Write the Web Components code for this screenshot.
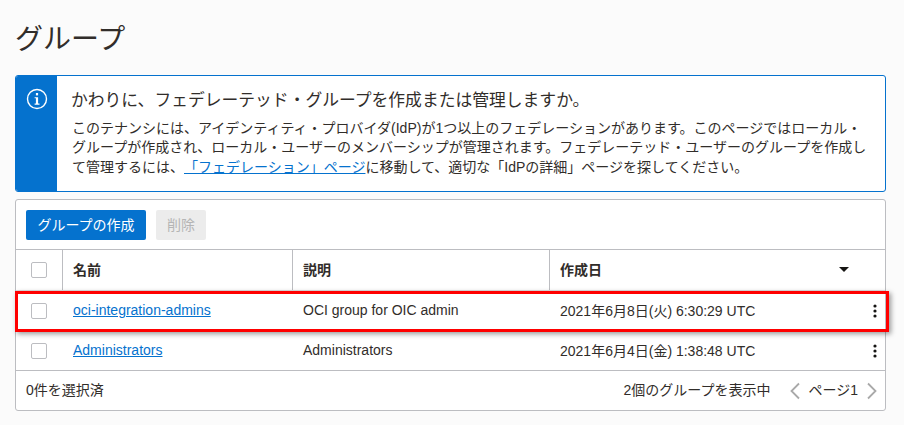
<!DOCTYPE html>
<html lang="ja">
<head>
<meta charset="utf-8">
<title>グループ</title>
<style>
  html, body { margin: 0; padding: 0; background: #fbfbfb; }
  body { font-family: "Liberation Sans", "Noto Sans CJK JP", sans-serif; color: #312d2a; width: 904px; height: 425px; overflow: hidden; text-spacing-trim: space-all; }
</style>
</head>
<body>
<groups-page>
  <info-alert>
    <span slot="title">かわりに、フェデレーテッド・グループを作成または管理しますか。</span>
    このテナンシには、アイデンティティ・プロバイダ(IdP)が1つ以上のフェデレーションがあります。このページではローカル・<br>グループが作成され、ローカル・ユーザーのメンバーシップが管理されます。フェデレーテッド・ユーザーのグループを作成し<br>て管理するには、<a href="#" style="color:#0572ce">「フェデレーション」ページ</a>に移動して、適切な「IdPの詳細」ページを探してください。
  </info-alert>
  <groups-table>
    <group-row name="oci-integration-admins" desc="OCI group for OIC admin" date="2021年6月8日(火) 6:30:29 UTC"></group-row>
    <group-row name="Administrators" desc="Administrators" date="2021年6月4日(金) 1:38:48 UTC"></group-row>
  </groups-table>
</groups-page>
<script>
const FONT = `"Liberation Sans", "Noto Sans CJK JP", sans-serif`;

class GroupsPage extends HTMLElement {
  constructor() {
    super();
    this.attachShadow({mode: 'open'}).innerHTML = `
      <style>
        :host { display: flex; flex-direction: column; padding: 0 18px 0 15px; font-family: ${FONT}; }
        h1 { margin: 0; padding-top: 20px; height: 75px; box-sizing: border-box; font-size: 28px; line-height: 40px; font-weight: 400; color: #312d2a; }
      </style>
      <h1>グループ</h1>
      <slot></slot>`;
  }
}

class InfoAlert extends HTMLElement {
  constructor() {
    super();
    this.attachShadow({mode: 'open'}).innerHTML = `
      <style>
        :host { display: flex; height: 117px; box-sizing: border-box; border: 1px solid #0572ce; border-radius: 3px; background: #fff; overflow: hidden; margin-bottom: 7px; }
        .strip { width: 41px; flex: none; background: #0572ce; display: flex; justify-content: center; padding-top: 12px; box-sizing: border-box; }
        svg { width: 22px; height: 22px; }
        .body { padding: 14px 0 0 15px; font-size: 14px; line-height: 19.3px; color: #312d2a; white-space: nowrap; }
        .title { font-size: 16.8px; line-height: 22px; margin-bottom: 7px; margin-left: -1px; }
      </style>
      <div class="strip">
        <svg viewBox="0 0 22 22" fill="none">
          <circle cx="11" cy="11" r="9.5" stroke="#fff" stroke-width="1.4"/>
          <rect x="9.9" y="5" width="2.2" height="2.4" fill="#fff"/>
          <path d="M8.6 9.2h3.5v6.4h1.4v1.1H8.6v-1.1h1.3v-5.3H8.6z" fill="#fff"/>
        </svg>
      </div>
      <div class="body">
        <div class="title"><slot name="title"></slot></div>
        <slot></slot>
      </div>`;
  }
}

class GroupsTable extends HTMLElement {
  constructor() {
    super();
    this.attachShadow({mode: 'open'}).innerHTML = `
      <style>
        :host { display: block; position: relative; height: 212px; box-sizing: border-box; border: 1px solid #bcbdc1; border-radius: 3px; background: #fff; font-size: 14px; color: #312d2a; }
        .toolbar { height: 50px; box-sizing: border-box; padding: 10px; display: flex; gap: 10px; border-bottom: 1px solid #bcbdc1; }
        button { font: inherit; font-size: 14px; border: 0; border-radius: 2px; height: 30px; padding: 0 11px 2px; width: 120px; }
        .primary { background: #0572ce; color: #fff; }
        .off { background: #ececec; color: #b5b5b5; width: 50px; padding: 0 0 2px; }
        .head { display: grid; grid-template-columns: 46px 230px 257px 1fr; height: 40px; box-sizing: border-box; font-weight: 700; font-size: 14px; }
        .head > div { display: flex; align-items: center; padding-left: 10px; padding-bottom: 2px; border-left: 1px solid #bcbdc1; box-sizing: border-box; }
        .head > div:first-child { border-left: 0; padding-left: 15px; padding-bottom: 0; }
        .head .sort { justify-content: space-between; padding-right: 36px; }
        .sort i { width: 0; height: 0; border: 5px solid transparent; border-top: 5px solid #161513; border-bottom: 0; }
        .box { width: 14px; height: 14px; border: 1px solid #bcbdc1; border-radius: 2px; background: #fff; }
        .foot { display: flex; align-items: center; justify-content: space-between; padding: 0 7px 4px 10px; border-top: 1px solid #bcbdc1; box-sizing: content-box; height: 36px; }
        .pager { display: flex; align-items: center; }
        .pager svg { width: 12px; height: 18px; margin-top: 4px; }
        .count { margin-right: 19px; }
        .page { margin: 0 8px 0 7px; }
        .mark { position: absolute; left: -1px; right: -4px; top: 91px; height: 41px; box-sizing: border-box; border: 3px solid #f00; box-shadow: 2px 2px 5px rgba(0,0,0,.4); pointer-events: none; }
      </style>
      <div class="toolbar">
        <button class="primary">グループの作成</button>
        <button class="off">削除</button>
      </div>
      <div class="head">
        <div><span class="box"></span></div>
        <div>名前</div>
        <div>説明</div>
        <div class="sort">作成日<i></i></div>
      </div>
      <slot></slot>
      <div class="foot">
        <span>0件を選択済</span>
        <span class="pager">
          <span class="count">2個のグループを表示中</span>
          <svg viewBox="0 0 12 18" fill="none" stroke="#a9a9a9" stroke-width="1.8"><path d="M10 1.5 2.5 9l7.5 7.5"/></svg>
          <span class="page">ページ1</span>
          <svg viewBox="0 0 12 18" fill="none" stroke="#a9a9a9" stroke-width="1.8"><path d="M2 1.5 9.5 9 2 16.5"/></svg>
        </span>
      </div>
      <div class="mark"></div>`;
  }
}

class GroupRow extends HTMLElement {
  constructor() {
    super();
    const name = this.getAttribute('name');
    const desc = this.getAttribute('desc');
    const date = this.getAttribute('date');
    this.attachShadow({mode: 'open'}).innerHTML = `
      <style>
        :host { display: grid; grid-template-columns: 46px 230px 257px 1fr 26px; height: 40px; box-sizing: border-box; border-top: 1px solid #dfdfdf; align-items: center; font-size: 14px; }
        .cell { padding-left: 11px; padding-bottom: 2px; white-space: nowrap; }
        .check { padding-left: 15px; display: flex; }
        .box { width: 14px; height: 14px; border: 1px solid #bcbdc1; border-radius: 2px; background: #fff; }
        a { color: #0572ce; }
        svg { width: 4px; height: 14px; display: block; }
        .more { display: flex; justify-content: flex-start; padding-left: 14px; }
      </style>
      <div class="check"><span class="box"></span></div>
      <div class="cell"><a href="#">${name}</a></div>
      <div class="cell">${desc}</div>
      <div class="cell">${date}</div>
      <div class="more"><svg viewBox="0 0 4 14" fill="#161513"><circle cx="2" cy="2" r="1.6"/><circle cx="2" cy="7" r="1.6"/><circle cx="2" cy="12" r="1.6"/></svg></div>`;
  }
}

customElements.define('groups-page', GroupsPage);
customElements.define('info-alert', InfoAlert);
customElements.define('groups-table', GroupsTable);
customElements.define('group-row', GroupRow);
</script>
</body>
</html>
